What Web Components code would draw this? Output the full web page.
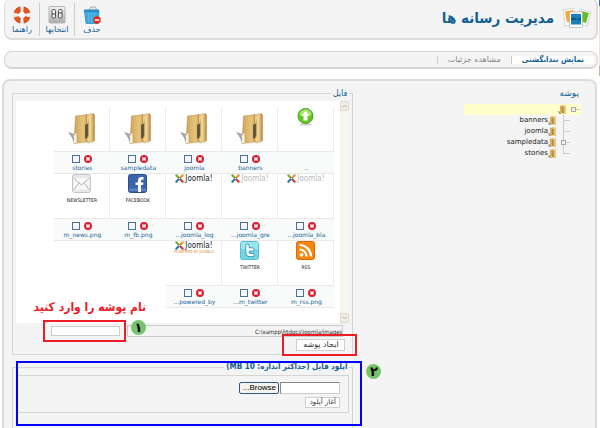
<!DOCTYPE html>
<html lang="fa" dir="rtl">
<head>
<meta charset="utf-8">
<title>مدیریت رسانه ها</title>
<style>
  body {
    margin: 0;
    height: 100vh;
    overflow: hidden;
    background: #fff;
    color: #146295;
    font-family: "DejaVu Sans", sans-serif;
    font-size: 8px;
    line-height: 12px;
    --narrow: "DejaVu Sans Condensed", "DejaVu Sans", sans-serif;
  }
</style>
</head>
<body>
<media-manager></media-manager>

<script>
const ICONS = {
  help: `<svg viewBox="0 0 18 18" width="18" height="18"><circle cx="9" cy="9" r="6" fill="none" stroke="#f4f1ec" stroke-width="5"/><circle cx="9" cy="9" r="8.500" fill="none" stroke="#ddd" stroke-width=".6"/><g fill="#e5551c" stroke="#b8400f" stroke-width=".4"><path d="M7 .8A8 8 0 0 0 1 6.500L6 7.500L7.500 6zM11 .8A8 8 0 0 1 17 6.500L12 7.500L10.500 6zM7 17.200A8 8 0 0 1 1 11.500L6 10.500L7.500 12zM11 17.200A8 8 0 0 0 17 11.500L12 10.500L10.500 12z"/></g><circle cx="9" cy="9" r="3" fill="#fff"/></svg>`,
  options: `<svg viewBox="0 0 18 18" width="18" height="18"><defs><linearGradient id="g" x2="0" y2="1"><stop stop-color="#f4f4f4"/><stop offset="1" stop-color="#aaa"/></linearGradient></defs><rect x="1" y=".5" width="16" height="16.500" rx="1" fill="url(#g)" stroke="#b5b5b5"/><g fill="#eee" stroke="#555" stroke-width="1"><rect x="4" y="3.500" width="3.500" height="8.500" rx="1"/><rect x="10.500" y="3.500" width="3.500" height="8.500" rx="1"/></g><path d="M4 8h3.500M10.500 7h3.500" stroke="#444" stroke-width="1.200"/></svg>`,
  trash: `<svg viewBox="0 0 18 18" width="18" height="18"><path d="M6 4Q7 0 10 1Q14 0 13 4" fill="#e8e8e8" stroke="#999" stroke-width=".8"/><path d="M1.500 5H16L15 17.500H3z" fill="#3aa9e0" stroke="#1b79b0" stroke-width=".6"/><path d="M5.500 7l.5 9M8.500 7v9M11.500 7l-.5 9" stroke="#58bbea" stroke-width="1"/><path d="M1 3.500H16V6H1z" fill="#268cc8"/><circle cx="14" cy="14" r="3.700" fill="#dd2c1e"/><path d="M11.800 14h4.400" stroke="#fff" stroke-width="1.500"/></svg>`,
  media: `<svg viewBox="0 0 30 22" width="30" height="22"><g stroke="#bbb" stroke-width=".6"><path d="M1 3L12 1L15 17L3 19z" fill="#fff"/><path d="M18 2L29 5L25 19L15 16z" fill="#fff"/></g><path d="M3 4.500L11 3L13 14L5 15.500z" fill="#f7a928"/><path d="M19 4L27 6L24 16L17 14z" fill="#61bd20"/><rect x="7.500" y="5" width="13" height="15.500" fill="#f8fbfd" stroke="#aaa" stroke-width=".6"/><rect x="9" y="7" width="10" height="10.500" fill="#1b7fb9"/><path d="M9 12L12 10.500L15 12.500L19 10.500V13H9z" fill="#095681"/></svg>`,
  folder: `<svg viewBox="0 0 27 31" width="27" height="31"><defs><linearGradient id="a"><stop stop-color="#cda458"/><stop offset=".7" stop-color="#e6c47d"/><stop offset="1" stop-color="#d3aa5e"/></linearGradient><linearGradient id="b"><stop stop-color="#e5c47e"/><stop offset=".5" stop-color="#efd593"/><stop offset="1" stop-color="#b8893e"/></linearGradient></defs><path d="M0 19L7 21V30H6L4 25z" fill="#8e8e8e" opacity=".75"/><path d="M7.500 3L19 1.500V29L6 30.500z" fill="url(#a)" stroke="#a77c35" stroke-width=".4"/><path d="M17 12L20.500 10V28L17 25z" fill="#62543a"/><path d="M6 22L8.500 20V30H6z" fill="#f7f3e5"/><path d="M18.500 2L25.500 .5L26.500 2V28L20 30L18.500 26L20.500 22V8L18.500 11z" fill="url(#b)" stroke="#a77c35" stroke-width=".4"/></svg>`,
  up: `<svg viewBox="0 0 17 18" width="17" height="18"><ellipse cx="8.500" cy="16.500" rx="6" ry="1" fill="#ccc"/><circle cx="8.500" cy="8" r="7.500" fill="#64c91e" stroke="#398b16" stroke-width=".8"/><path d="M2.500 7a6 5.500 0 0 1 12 0z" fill="#a6e76e"/><path d="M8.500 3L13 8H10.500V12.500H6.500V8H4z" fill="#fff"/></svg>`,
  mail: `<svg viewBox="0 0 19 19" width="19" height="19"><rect x=".5" y=".5" width="18" height="18" rx="2" fill="#e9e9e9" stroke="#c5c5c5"/><path d="M1.500 4H17.500V15.500H1.500z" fill="#f7f7f7"/><path d="M1.500 4L9.500 11L17.500 4M1.500 16L7 9M17.500 16L12 9" fill="none" stroke="#b3b3b3"/></svg>`,
  facebook: `<svg viewBox="0 0 19 19" width="19" height="19"><rect x=".5" y=".5" width="18" height="18" rx="2" fill="#3b64ac" stroke="#2b508f"/><path d="M1 14.500H18V17H1z" fill="#5b80c0"/><path d="M10 18V11H7.500V8.500H10V6.500Q10 3 13.500 3H15.500V5.700H14Q13 5.700 13 7V8.500H15.500L15 11H13V18z" fill="#fff"/></svg>`,
  twitter: `<svg viewBox="0 0 19 19" width="19" height="19"><rect x=".5" y=".5" width="18" height="18" rx="2" fill="#75d6e3" stroke="#58bdd0"/><path d="M1 1H18V8H1z" fill="#9be6ee"/><path d="M7.500 4.500V11.500Q7.500 14 10 14H12.500M7.500 8.500H12.500" fill="none" stroke="#1d86a9" stroke-width="4" stroke-linecap="round"/><path d="M7.500 4.500V11.500Q7.500 14 10 14H12.500M7.500 8.500H12.500" fill="none" stroke="#fff" stroke-width="2.600" stroke-linecap="round"/></svg>`,
  rss: `<svg viewBox="0 0 19 19" width="19" height="19"><rect x=".5" y=".5" width="18" height="18" rx="2" fill="#f5860d" stroke="#de6b00"/><circle cx="5.500" cy="13.800" r="1.900" fill="#fff"/><path d="M3.500 8.500A7 7 0 0 1 10.500 15.500M3.500 4A11.500 11.500 0 0 1 15 15.500" fill="none" stroke="#fff" stroke-width="2.200"/></svg>`,
  joomla: `<svg viewBox="0 0 9 9" width="9" height="9"><g fill="none" stroke-width="2" stroke-linecap="round"><path d="M1.300 1.300L4.500 4.500" stroke="#6ba82f"/><path d="M7.700 1.300L4.500 4.500" stroke="#ee8e20"/><path d="M7.700 7.700L4.500 4.500" stroke="#d93525"/><path d="M1.300 7.700L4.500 4.500" stroke="#2473ae"/></g><circle cx="4.500" cy="4.500" r=".8" fill="#fff"/></svg>`,
  remove: `<svg viewBox="0 0 8 8" width="8" height="8"><circle cx="4" cy="4" r="4" fill="#dc1f32"/><path d="M2.400 2.400L5.600 5.600M5.600 2.400L2.400 5.600" stroke="#fff" stroke-width="1.400"/></svg>`,
  node: `<svg viewBox="0 0 9 11" width="9" height="11"><path d="M0 7L3 8V10H1z" fill="#999"/><path d="M2 2L5.500 1V9L2 10z" fill="#d7ad5c"/><path d="M5 2L8 1V10H5z" fill="#e9c77e"/><path d="M5 3V9" stroke="#755628" stroke-width=".8"/></svg>`
};

function define(name, markup, setup) {
  const template = document.createElement("template");
  template.innerHTML = markup;
  customElements.define(name, class extends HTMLElement {
    constructor() {
      super();
      this.attachShadow({ mode: "open" }).append(template.content.cloneNode(true));
    }

    connectedCallback() {
      if (setup) {
        setup(this, this.shadowRoot);
      }
    }
  });
}

function makeIcon(name) {
  const icon = document.createElement("mm-icon");
  icon.setAttribute("name", name);
  return icon;
}

define("mm-icon", `
  <style>
    :host { display: block; flex: none; }
    svg { display: block; }
  </style>
  <span id="icon"></span>
`, (host, root) => {
  root.querySelector("#icon").innerHTML = ICONS[host.getAttribute("name")] ?? "";
});

define("tool-button", `
  <style>
    :host { display: block; width: 34px; }
    :host(:not(:first-of-type)) { border-right: 1px solid #ccc; }
    button {
      display: flex;
      flex-direction: column;
      align-items: center;
      width: 100%;
      padding: 3px 0 0;
      border: 0;
      background: none;
      color: inherit;
      font: inherit;
      white-space: nowrap;
    }
  </style>
  <button type="button"><slot></slot></button>
`, (host, root) => {
  root.querySelector("button").prepend(makeIcon(host.getAttribute("icon")));
});

define("page-header", `
  <style>
    :host {
      display: flex;
      justify-content: space-between;
      box-sizing: border-box;
      height: 42px;
      margin: -2px 2px 0 4px;
      padding: 5px 4px 0 0;
      border: 2px solid #dcdcdc;
      border-width: 0 2px 2px 1px;
      border-radius: 8px;
      background: #f4f4f4;
    }
    .title { display: flex; gap: 8px; align-items: flex-start; padding-top: 4px; }
    h1 { margin: 0; font: bold 15px/22px var(--narrow); }
    nav { display: flex; height: 33px; }
  </style>
  <div class="title"><mm-icon name="media"></mm-icon><h1><slot></slot></h1></div>
  <nav>
    <tool-button icon="trash">حذف</tool-button>
    <tool-button icon="options">انتخابها</tool-button>
    <tool-button icon="help">راهنما</tool-button>
  </nav>
`);

define("view-tabs", `
  <style>
    :host {
      display: flex;
      align-items: center;
      box-sizing: border-box;
      height: 18px;
      margin: 11px 2px 0 4px;
      padding: 0 3px;
      border: 1px solid #d5d5d5;
      border-bottom-width: 2px;
      border-radius: 8px;
      background: #f4f4f4;
    }
    a {
      padding: 0 10px;
      border-left: 1px solid #ccc;
      color: #888;
      line-height: 8px;
      text-decoration: none;
    }
    a.active { background: #fff; color: #146295; font-family: var(--narrow); font-weight: bold; }
  </style>
  <a class="active" href="#thumbs">نمایش بندانگشتی</a>
  <a href="#details">مشاهده جزئیات</a>
`);

define("media-item", `
  <style>
    :host { display: block; min-width: 0; font-size: 6px; }
    .thumb {
      display: flex;
      flex-direction: column;
      align-items: center;
      box-sizing: border-box;
      height: 44px;
      border-right: 1px solid #eee;
      color: #222;
      line-height: 14px;
    }
    .info {
      box-sizing: border-box;
      height: 23px;
      border: 1px solid #e9e9e9;
      border-width: 1px 0;
      background: #f9fbfa;
      text-align: center;
    }
    .controls { display: flex; justify-content: center; gap: 4px; height: 8px; padding: 3px 0 0; }
    .controls button { width: 8px; height: 8px; padding: 0; border: 0; background: none; }
    input {
      appearance: none;
      width: 8px;
      height: 8px;
      margin: 0;
      border: 1px solid #4a7298;
      background: #f5f5f5;
    }
    label { display: block; line-height: 10px; white-space: nowrap; }
    :host([kind="folder"]) .thumb { padding-top: 6px; }
    :host([kind="up"]) .thumb { padding-top: 1px; }
    :host([kind="up"]) .controls > * { display: none; }
    .caption { font-family: var(--narrow); font-size: 5px; }
    .brand { display: flex; gap: 1px; direction: ltr; font: 8px/9px var(--narrow); }
    .faint { color: #bbb; }
    .powered { font-family: var(--narrow); font-size: 4px; line-height: 4px; color: #e58a35; }
  </style>
  <div class="thumb"></div>
  <div class="info">
    <div class="controls"><button type="button"><mm-icon name="remove"></mm-icon></button><input type="checkbox" id="pick"></div>
    <label for="pick"></label>
  </div>
`, (host, root) => {
  const kind = host.getAttribute("kind");
  const caption = host.getAttribute("caption");
  const thumb = root.querySelector(".thumb");
  const name = host.getAttribute("name");
  root.querySelector("label").textContent = name;
  root.querySelector("button").setAttribute("aria-label", `delete ${name}`);

  if (kind === "joomla") {
    const brand = document.createElement("div");
    brand.className = host.hasAttribute("faint") ? "brand faint" : "brand";
    brand.append(makeIcon("joomla"), "Joomla!");
    thumb.replaceChildren(brand);
  } else {
    thumb.replaceChildren(makeIcon(kind));
  }

  if (caption) {
    const line = document.createElement("div");
    line.className = kind === "joomla" ? "powered" : "caption";
    line.textContent = caption;
    thumb.append(line);
  }
});

define("media-frame", `
  <style>
    :host { display: flex; height: 222px; background: #fff; }
    .grid {
      flex: 1;
      display: grid;
      grid-template-columns: repeat(auto-fill, 56px);
      align-content: start;
      padding: 6px 6px 0 0;
    }
    .scroll {
      display: flex;
      flex-direction: column;
      justify-content: space-between;
      width: 9px;
      background: #f7f6f1;
    }
    .scroll button {
      display: grid;
      place-items: center;
      width: 9px;
      height: 10px;
      padding: 0;
      border: 1px solid #dddbd0;
      border-radius: 1px;
      background: #efede4;
    }
    svg { display: block; fill: none; stroke: #b8b6ab; }
  </style>
  <div class="scroll">
    <button type="button" aria-label="up"><svg width="5" height="4"><path d="M0 3.500L2.500 1L5 3.500"/></svg></button>
    <button type="button" aria-label="down"><svg width="5" height="4"><path d="M0 .5L2.500 3L5 .5"/></svg></button>
  </div>
  <div class="grid"><slot></slot></div>
`);

// Coloured outline drawn over its slotted content, with a numbered badge.
define("callout-mark", `
  <style>
    :host { display: block; position: relative; --ink: #ee1c25; }
    :host([area="upload"]) { --ink: #00f; }
    .box {
      position: absolute;
      inset: -5px -6px -5px -8px;
      border: 2px solid var(--ink);
      pointer-events: none;
    }
    .badge {
      position: absolute;
      top: -5px;
      left: calc(100% + 11px);
      width: 15px;
      height: 15px;
      border-radius: 50%;
      background: #78c36e;
      color: #000;
      font-size: 13px;
      font-weight: bold;
      line-height: 15px;
      text-align: center;
    }
    .badge:empty { display: none; }
    .note {
      position: absolute;
      right: -26px;
      bottom: calc(100% + 9px);
      color: var(--ink);
      font: bold 12px/18px var(--narrow);
      white-space: nowrap;
    }
    :host([area="button"]) .box { inset: -5px -12px -5px -14px; }
    :host([area="upload"]) .box { inset: 0 -9px auto 4px; height: 61px; }
    :host([area="upload"]) .badge { top: 3px; left: calc(100% + 13px); }
  </style>
  <slot></slot>
  <div class="box"></div>
  <div class="badge"></div>
  <div class="note"></div>
`, (host, root) => {
  root.querySelector(".badge").textContent = host.getAttribute("number") ?? "";
  root.querySelector(".note").textContent = host.getAttribute("note") ?? "";
});

const FORM_STYLE = `
  fieldset { min-width: 0; margin: 0; padding: 2px 3px 3px; border: 1px solid #d5d5d5; }
  legend { padding: 0 2px; font: bold 8px/12px var(--narrow); }
  input { box-sizing: border-box; margin: 0; padding: 0 2px; border: 1px solid #ccc; border-radius: 0; }
  button {
    box-sizing: border-box;
    display: block;
    margin: 0;
    padding: 0 4px;
    border: 1px solid #d0d0d0;
    background: #fff;
    color: #333;
    font: inherit;
    line-height: 10px;
    white-space: nowrap;
  }
`;

define("file-panel", `
  <style>
    ${FORM_STYLE}
    :host { display: block; }
    legend { font-size: 9px; font-weight: normal; }
    .path { display: flex; gap: 7px; padding: 2px 6px 0 35px; }
    #path {
      flex: 1;
      min-width: 0;
      height: 12px;
      padding: 0;
      background: #f4f4f4;
      color: #222;
      font: 6px var(--narrow);
      direction: ltr;
      text-align: right;
    }
    #name { display: block; width: 69px; height: 10px; margin-top: 1px; background: #fff; }
    .actions { display: flex; padding: 2px 4px 0; }
    .actions button { width: 49px; height: 12px; }
  </style>
  <fieldset>
    <legend>فایل</legend>
    <media-frame>
      <media-item kind="up" name=".."></media-item>
      <media-item kind="folder" name="banners"></media-item>
      <media-item kind="folder" name="joomla"></media-item>
      <media-item kind="folder" name="sampledata"></media-item>
      <media-item kind="folder" name="stories"></media-item>
      <media-item kind="joomla" faint name="joomla_bla..."></media-item>
      <media-item kind="joomla" faint name="joomla_gre..."></media-item>
      <media-item kind="joomla" name="joomla_log..."></media-item>
      <media-item kind="facebook" caption="FACEBOOK" name="m_fb.png"></media-item>
      <media-item kind="mail" caption="NEWSLETTER" name="m_news.png"></media-item>
      <media-item kind="rss" caption="RSS" name="m_rss.png"></media-item>
      <media-item kind="twitter" caption="TWITTER" name="m_twitter..."></media-item>
      <media-item kind="joomla" caption="POWERED BY JOOMLA" name="powered_by..."></media-item>
    </media-frame>
    <div class="path">
      <input id="path" type="text" readonly aria-label="مسیر" value="C:\\xampp\\htdocs\\joomla/images">
      <callout-mark number="۱" note="نام پوشه را وارد کنید"><input id="name" type="text" aria-label="نام پوشه"></callout-mark>
    </div>
    <div class="actions">
      <callout-mark area="button"><button type="button">ایجاد پوشه</button></callout-mark>
    </div>
  </fieldset>
`);

define("upload-panel", `
  <style>
    ${FORM_STYLE}
    :host { display: block; margin-top: 6px; }
    fieldset { min-height: 80px; }
    .group { padding: 6px 8px 4px; border: 1px solid #d5d5d5; }
    .row { display: flex; gap: 1px; margin-bottom: 3px; }
    .row input { width: 60px; height: 12px; border-color: #888 #ccc #ccc #888; background: #fff; }
    .row button { width: 40px; padding: 0; border-color: #31597c; border-radius: 2px; background: #f4f3ee; color: #000; font: 8px/10px "Liberation Sans", sans-serif; }
    .start { width: 35px; height: 11px; padding: 0; font-size: 7px; line-height: 9px; }
  </style>
  <callout-mark area="upload" number="۲">
    <fieldset>
      <legend>آپلود فایل (حداکثر اندازه: 10 MB)</legend>
      <div class="group">
        <div class="row"><input type="text" aria-label="فایل"><button type="button">Browse...</button></div>
        <button class="start" type="button">آغاز آپلود</button>
      </div>
    </fieldset>
  </callout-mark>
`);

define("tree-node", `
  <style>
    :host { display: flex; align-items: center; height: 11px; color: #222; font-size: 7px; line-height: 11px; }
    .branch { position: relative; width: 16px; height: 11px; }
    .branch::before { content: ""; position: absolute; top: 0; bottom: 0; right: 9px; border-right: 1px solid #ccc; }
    .branch::after { content: ""; position: absolute; top: 5px; right: 3px; width: 6px; border-top: 1px solid #ccc; }
    :host([last]) .branch::before { bottom: 5px; }
    :host([root]) { background: #ffc; }
    :host([root]) .branch { width: 14px; }
    :host([root]) .branch::before { display: none; }
    :host([root]) .branch::after { right: 1px; }
    i { display: none; position: absolute; z-index: 1; top: 3px; right: 7px; width: 3px; height: 3px; border: 1px solid #aaa; background: #eee; }
    :host([open]) i { display: block; }
    :host([root]) i { right: 5px; }
  </style>
  <span class="branch"><i></i></span><mm-icon name="node"></mm-icon><slot></slot>
`);

define("folder-tree", `
  <style>
    :host { display: block; }
    h2 { margin: 0 2px 5px; font-size: 9px; font-weight: normal; line-height: 12px; }
    .tree { width: 117px; }
    .children { padding-right: 8px; }
  </style>
  <h2>پوشه</h2>
  <div class="tree">
    <tree-node root open></tree-node>
    <div class="children">
      <tree-node>banners</tree-node>
      <tree-node>joomla</tree-node>
      <tree-node open>sampledata</tree-node>
      <tree-node last>stories</tree-node>
    </div>
  </div>
`);

define("media-manager", `
  <style>
    :host { display: flex; flex-direction: column; position: relative; height: 100%; }
    /* sliver of the window behind */
    :host::after {
      content: "";
      position: absolute;
      top: 0;
      right: 0;
      width: 1px;
      height: 76px;
      background: linear-gradient(#3a68c8 6px, #e9e6d6 6px 66px, #bbb8aa 66px);
    }
    main {
      flex: 1;
      min-height: 0;
      display: grid;
      grid-template-columns: 2fr 3fr;
      margin: 10px 3px 0 2px;
      padding: 6px 14px 0 8px;
      border: 2px solid #dcdcdc;
      border-bottom: 0;
      border-radius: 8px 8px 0 0;
      background: #f4f4f4;
    }
  </style>
  <page-header>مدیریت رسانه ها</page-header>
  <view-tabs></view-tabs>
  <main>
    <folder-tree></folder-tree>
    <div>
      <file-panel></file-panel>
      <upload-panel></upload-panel>
    </div>
  </main>
`);
</script>
</body>
</html>
